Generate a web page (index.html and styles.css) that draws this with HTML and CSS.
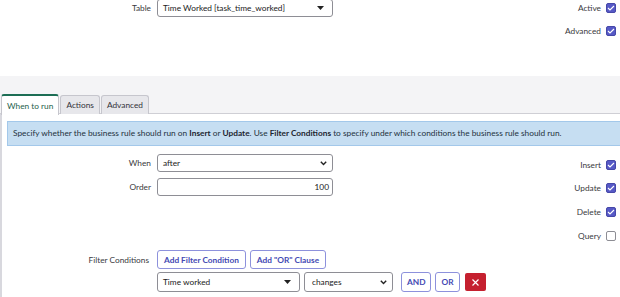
FILE: index.html
```html
<!DOCTYPE html>
<html>
<head>
  <title>Business Rule</title>
  <meta charset="utf-8">
  <link rel="stylesheet" href="styles.css">
</head>
<body>
<div class="top">
  <div class="fields">
    <div class="row">
      <label>Table</label>
      <div class="select wide">
        <span>Time Worked [task_time_worked]</span>
        <svg class="tri" width="7" height="4" viewBox="0 0 7 4"><path d="M0 0h7L3.5 4z" fill="#222"/></svg>
      </div>
    </div>
  </div>
  <div class="flags top-flags">
    <div class="flag">Active <span class="check on"><svg width="8" height="6" viewBox="0 0 8 6"><path d="M1 3l2 2 4-4" stroke="#fff" stroke-width="1.1" fill="none"/></svg></span></div>
    <div class="flag">Advanced <span class="check on"><svg width="8" height="6" viewBox="0 0 8 6"><path d="M1 3l2 2 4-4" stroke="#fff" stroke-width="1.1" fill="none"/></svg></span></div>
  </div>
</div>

<div class="band">
  <div class="tabs">
    <div class="tab active">When to run</div>
    <div class="tab">Actions</div>
    <div class="tab">Advanced</div>
  </div>
</div>

<div class="panel">
  <div class="info">Specify whether the business rule should run on <b>Insert</b> or <b>Update</b>. Use <b>Filter Conditions</b> to specify under which conditions the business rule should run.</div>
  <div class="body">
    <div class="fields">
      <div class="row">
        <label>When</label>
        <div class="select wide">
          <span>after</span>
          <svg class="chev" width="7" height="5" viewBox="0 0 7 5"><path d="M0.8 0.8l2.7 2.7 2.7-2.7" stroke="#222" stroke-width="1.4" fill="none"/></svg>
        </div>
      </div>
      <div class="row">
        <label>Order</label>
        <div class="input wide">100</div>
      </div>
      <div class="row filter">
        <label>Filter Conditions</label>
        <button class="btn">Add Filter Condition</button>
        <button class="btn">Add "OR" Clause</button>
      </div>
      <div class="row cond">
        <label></label>
        <div class="select field">
          <span>Time worked</span>
          <svg class="tri" width="7" height="4" viewBox="0 0 7 4"><path d="M0 0h7L3.5 4z" fill="#222"/></svg>
        </div>
        <div class="select oper">
          <span>changes</span>
          <svg class="chev" width="7" height="5" viewBox="0 0 7 5"><path d="M0.8 0.8l2.7 2.7 2.7-2.7" stroke="#222" stroke-width="1.4" fill="none"/></svg>
        </div>
        <button class="btn and">AND</button>
        <button class="btn">OR</button>
        <button class="del"><svg width="7" height="7" viewBox="0 0 7 7"><path d="M0.5 0.5l6 6M6.5 0.5l-6 6" stroke="#fff" stroke-width="1.2"/></svg></button>
      </div>
    </div>
    <div class="flags">
      <div class="flag">Insert <span class="check on"><svg width="8" height="6" viewBox="0 0 8 6"><path d="M1 3l2 2 4-4" stroke="#fff" stroke-width="1.1" fill="none"/></svg></span></div>
      <div class="flag">Update <span class="check on"><svg width="8" height="6" viewBox="0 0 8 6"><path d="M1 3l2 2 4-4" stroke="#fff" stroke-width="1.1" fill="none"/></svg></span></div>
      <div class="flag">Delete <span class="check on"><svg width="8" height="6" viewBox="0 0 8 6"><path d="M1 3l2 2 4-4" stroke="#fff" stroke-width="1.1" fill="none"/></svg></span></div>
      <div class="flag">Query <span class="check"></span></div>
    </div>
  </div>
</div>
</body>
</html>
```

FILE: styles.css
```css
body {
  margin: 0;
  width: 620px;
  font-family: Lato, 'Open Sans', sans-serif;
  font-size: 8.3px;
  color: #2e2e33;
  background: #fff;
  overflow: hidden;
}
.top {
  display: flex;
  justify-content: space-between;
  height: 77px;
  margin-top: -1px;
}
.fields {
  display: flex;
  flex-direction: column;
}
.row {
  display: flex;
  align-items: center;
  gap: 4px;
  margin-bottom: 6px;
}
.row label {
  width: 153px;
  text-align: right;
  padding-right: 2px;
  box-sizing: border-box;
  color: #3a3a40;
}
.select, .input {
  display: flex;
  align-items: center;
  justify-content: space-between;
  height: 18px;
  box-sizing: border-box;
  border: 1px solid #8e8e95;
  border-radius: 3px;
  padding: 0 6px 0 5px;
  background: #fff;
  color: #222;
}
.wide { width: 176px; }
.input { justify-content: flex-end; padding-right: 3px; }
.select .tri { margin-right: 2px; }
.select .chev { margin-right: -1px; }
.flags {
  display: flex;
  flex-direction: column;
  align-items: flex-end;
  padding-right: 4px;
}
.top-flags { margin-top: -3px; }
.flag {
  display: flex;
  align-items: center;
  height: 23.6px;
  gap: 5px;
  color: #3a3a40;
}
.check {
  display: flex;
  align-items: center;
  justify-content: center;
  width: 10px;
  height: 10px;
  box-sizing: border-box;
  border: 1px solid #8d8d94;
  border-radius: 2px;
  background: #fff;
}
.check.on {
  background: #5659c6;
  border-color: #4648a8;
}
.band {
  background: #f4f4f6;
  height: 38px;
  box-sizing: border-box;
  padding: 18px 0 0 1px;
  border-bottom: 1px solid #cfcfd5;
}
.tabs {
  display: flex;
  align-items: flex-end;
  gap: 1px;
  height: 20px;
}
.tab {
  height: 19px;
  box-sizing: border-box;
  padding: 0 5px;
  display: flex;
  align-items: center;
  background: #e7e7eb;
  border: 1px solid #c6c6cd;
  border-bottom: none;
  border-radius: 3px 3px 0 0;
  color: #33333a;
}
.tab.active {
  height: 21px;
  margin-bottom: -1px;
  background: #fff;
  border-top: 2px solid #1d6e55;
  color: #1f5f4b;
  padding: 0 5px 0 5px;
}
.panel {
  border-left: 2px solid #d8d8de;
  padding-top: 7px;
}
.info {
  margin-left: 5px;
  height: 25px;
  line-height: 23px;
  box-sizing: border-box;
  padding-left: 5px;
  background: #c6def2;
  border: 1px solid #a3c8ea;
  border-right: none;
  color: #243240;
  white-space: nowrap;
}
.info b { font-weight: bold; color: #1d2530; }
.body {
  display: flex;
  justify-content: space-between;
}
.body .fields { padding-top: 8px; margin-left: -2px; }
.body .flags { padding-top: 7px; }
.row.filter { margin-top: 48px; margin-bottom: 3px; }
.row.filter label { padding-right: 4px; }
.btn {
  font-family: inherit;
  font-size: 8.3px;
  font-weight: bold;
  color: #4349b3;
  background: #fff;
  border: 1px solid #8d91dc;
  border-radius: 3px;
  height: 19px;
  padding: 0 6px;
  margin: 0;
}
.row.cond { gap: 4px; }
.field { width: 143px; height: 20px; }
.oper { width: 89px; height: 20px; padding-left: 7px; }
.and { margin-left: 4px; }
.row.cond .btn { height: 20px; padding: 0 5px; }
.del {
  margin-left: 1px;
  width: 21px;
  height: 18px;
  border: none;
  border-radius: 2px;
  background: #c5202f;
  display: flex;
  align-items: center;
  justify-content: center;
  padding: 0;
}
```
